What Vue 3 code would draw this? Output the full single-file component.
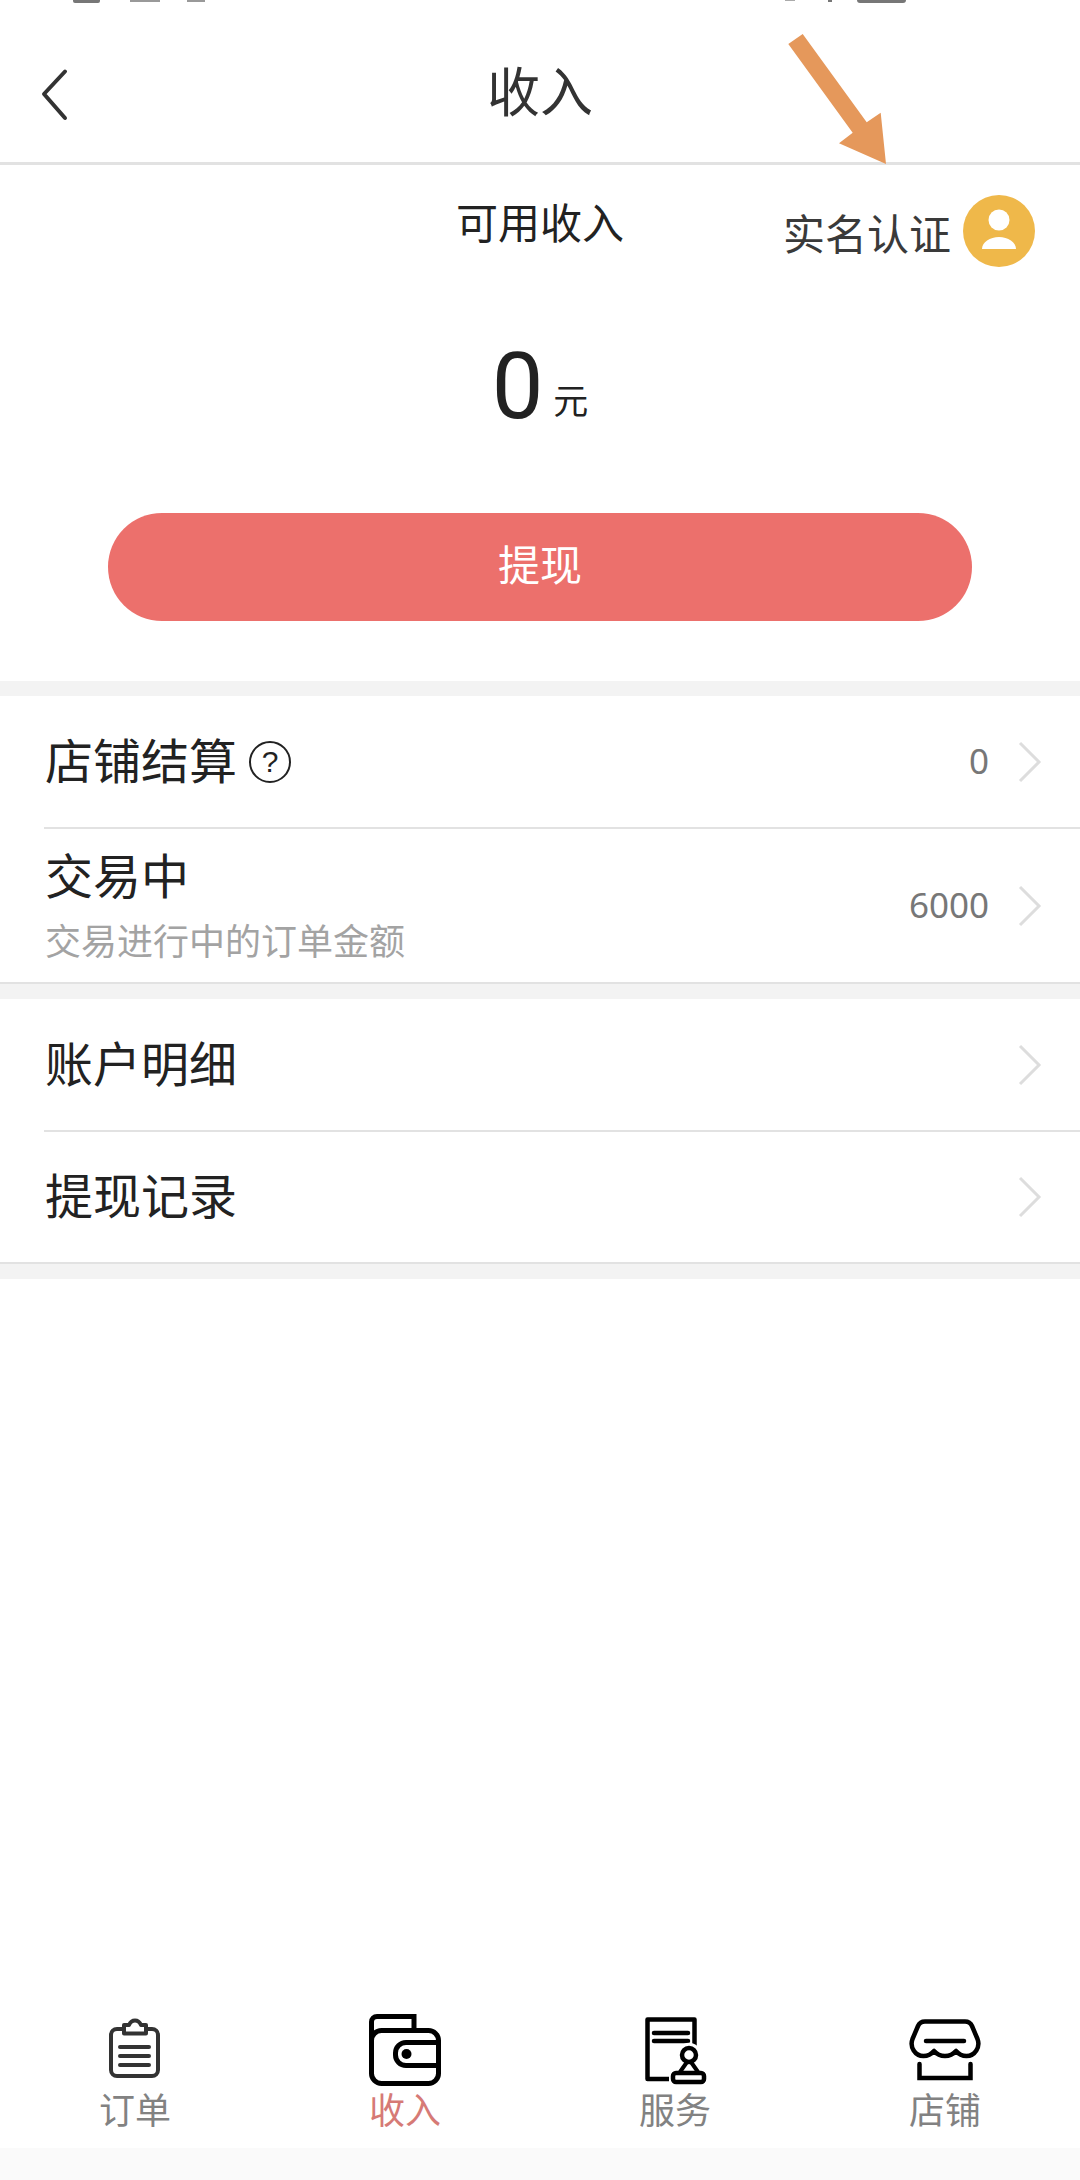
<template>
  <div class="page">
    <div class="status-bar">
      <div class="status-left">
        <span class="sb-sim"></span>
        <span class="sb-signal"></span>
        <span class="sb-wifi"></span>
      </div>
      <div class="status-right">
        <span class="sb-alarm"></span>
        <span class="sb-dot"></span>
        <span class="sb-battery"></span>
      </div>
    </div>

    <header class="nav">
      <svg class="back" width="32" height="56" viewBox="0 0 32 56">
        <path d="M25 3.5 4 26l21 24" fill="none" stroke="#333" stroke-width="4" stroke-linecap="round" stroke-linejoin="round" />
      </svg>
      <h1 class="title">收入</h1>
    </header>

    <svg class="arrow" width="110" height="140" viewBox="780 30 110 140">
      <polygon points="788.3,44 802.7,34 866.7,122.3 880.7,112.7 886,164 839,143.3 852.7,132.7" fill="#e5985b" />
    </svg>

    <section class="summary">
      <div class="verify">
        <span>实名认证</span>
        <svg width="72" height="72" viewBox="0 0 72 72">
          <circle cx="36" cy="36" r="36" fill="#efb84a" />
          <circle cx="36" cy="25" r="10.5" fill="#fff" />
          <path d="M19 54c0-7 8-12 17-12s17 5 17 12z" fill="#fff" />
        </svg>
      </div>
      <div class="label">可用收入</div>
      <div class="amount"><span class="num">0</span><span class="unit">元</span></div>
      <button class="withdraw">提现</button>
    </section>

    <div class="gap"></div>

    <div class="row row-first">
      <div class="row-text row-line">
        <span class="row-title">店铺结算</span>
        <span class="help">?</span>
      </div>
      <div class="row-end row-line">
        <span class="row-value">0</span>
        <svg class="chev" width="24" height="42" viewBox="0 0 24 42"><path d="M2 2l19 19L2 40" fill="none" stroke="#ddd" stroke-width="3" /></svg>
      </div>
    </div>
    <div class="row row-second row-full">
      <div class="row-text stacked">
        <span class="row-title">交易中</span>
        <span class="row-sub">交易进行中的订单金额</span>
      </div>
      <div class="row-end">
        <span class="row-value">6000</span>
        <svg class="chev" width="24" height="42" viewBox="0 0 24 42"><path d="M2 2l19 19L2 40" fill="none" stroke="#ddd" stroke-width="3" /></svg>
      </div>
    </div>

    <div class="gap"></div>

    <div class="row row-first">
      <div class="row-text row-line">
        <span class="row-title">账户明细</span>
      </div>
      <div class="row-end row-line">
        <svg class="chev" width="24" height="42" viewBox="0 0 24 42"><path d="M2 2l19 19L2 40" fill="none" stroke="#ddd" stroke-width="3" /></svg>
      </div>
    </div>
    <div class="row row-last row-full">
      <div class="row-text">
        <span class="row-title">提现记录</span>
      </div>
      <div class="row-end">
        <svg class="chev" width="24" height="42" viewBox="0 0 24 42"><path d="M2 2l19 19L2 40" fill="none" stroke="#ddd" stroke-width="3" /></svg>
      </div>
    </div>

    <div class="gap"></div>

    <div class="spacer"></div>

    <nav class="tabs">
      <div class="tab">
        <svg width="80" height="80" viewBox="0 0 80 80" fill="none" stroke="#333" stroke-width="4">
          <rect x="16" y="19" width="47" height="47" rx="6" />
          <path d="M29 23.5V15h5q2-4.5 6-4.5t6 4.5h5v8.5z" fill="#fff" stroke-linejoin="round" />
          <path d="M25 37h29M25 46h29M25 55h29" stroke-linecap="round" />
        </svg>
        <span>订单</span>
      </div>
      <div class="tab active">
        <svg width="80" height="80" viewBox="0 0 80 80" fill="none" stroke="#000" stroke-width="5">
          <path d="M6.5 30V12a5.500 5.500 0 0 1 5.500-5.500H49V20.500" />
          <rect x="6.500" y="20.500" width="67" height="53" rx="10" />
          <path d="M73.500 32.500H41A10.500 10.500 0 0 0 30.500 43v2A10.500 10.500 0 0 0 41 55.500H73.500" />
          <circle cx="41.500" cy="44" r="5" fill="#000" stroke="none" />
        </svg>
        <span>收入</span>
      </div>
      <div class="tab">
        <svg width="80" height="80" viewBox="0 0 80 80" fill="none" stroke="#000" stroke-width="4.500">
          <path d="M59.500 36V9.500H12.500V69H34" stroke-linejoin="round" />
          <path d="M19 23h34M19 31h34" stroke-linecap="round" />
          <circle cx="54" cy="45" r="10" fill="#fff" stroke="#fff" />
          <circle cx="54" cy="45" r="7" fill="#fff" />
          <path d="M52 52 45 62M56 52l7 10" stroke-width="4" />
          <rect x="38" y="63" width="31" height="9" rx="3" fill="#fff" />
        </svg>
        <span>服务</span>
      </div>
      <div class="tab">
        <svg width="80" height="80" viewBox="0 0 80 80" fill="none" stroke="#000" stroke-width="4.500">
          <path d="M20 11.500H60q5 0 7 4.500l5.500 13c3 8-2.500 17-11 17-5 0-8-2-10.500-5-3 3.500-6.500 5-11 5s-8-1.500-11-5c-2.500 3-5.500 5-10.500 5-8.500 0-14-9-11-17l5.500-13q2-4.500 7-4.500z" stroke-linejoin="round" />
          <path d="M21 31h38" stroke-linecap="round" />
          <path d="M14.500 54V68H65.500V54" stroke-linecap="round" />
        </svg>
        <span>店铺</span>
      </div>
    </nav>
    <div class="bottom-strip"></div>
  </div>
</template>

<script setup>
</script>

<style>
html, body {
  margin: 0;
  background: #fff;
}
</style>

<style scoped>
.page {
  position: relative;
  width: 1080px;
  height: 2180px;
  display: flex;
  flex-direction: column;
  background: #fff;
  overflow: hidden;
  font-family: "Noto Sans CJK SC", "Noto Sans", sans-serif;
}

.status-bar {
  height: 24px;
  display: flex;
  justify-content: space-between;
  align-items: flex-start;
  padding: 0 174px 0 73px;
}

.status-left, .status-right {
  display: flex;
  align-items: flex-start;
}

.sb-sim { width: 27px; height: 3px; background: #777; border-radius: 0 0 2px 2px; }
.sb-signal { width: 30px; height: 2px; margin-left: 30px; background: #999; }
.sb-wifi { width: 18px; height: 2px; margin-left: 27px; background: #999; }
.sb-alarm { width: 10px; height: 1px; background: #aaa; }
.sb-dot { width: 4px; height: 2px; margin-left: 33px; background: #777; }
.sb-battery { width: 49px; height: 3px; margin-left: 25px; background: #777; border-radius: 0 0 3px 3px; }

.nav {
  height: 141px;
  box-sizing: border-box;
  border-bottom: 3px solid #e2e2e2;
  display: flex;
  align-items: center;
  justify-content: center;
  position: relative;
}

.back {
  position: absolute;
  left: 40px;
  top: 44px;
}

.title {
  margin: 0 0 9px;
  font-size: 53px;
  font-weight: 400;
  color: #333;
  line-height: 72px;
}

.arrow {
  position: absolute;
  left: 780px;
  top: 30px;
  z-index: 2;
}

.summary {
  position: relative;
  height: 516px;
  box-sizing: border-box;
  padding-top: 26px;
  display: flex;
  flex-direction: column;
  align-items: center;
}

.verify {
  position: absolute;
  top: 30px;
  right: 45px;
  display: flex;
  align-items: center;
  gap: 12px;
  font-size: 42px;
  color: #3a3a3a;
}

.label {
  font-size: 42px;
  line-height: 60px;
  color: #222;
}

.amount {
  margin-top: 76px;
  height: 120px;
  display: flex;
  align-items: baseline;
  color: #222;
}

.num {
  font-family: Roboto, sans-serif;
  font-size: 92px;
  line-height: 120px;
}

.unit {
  font-size: 35px;
  margin-left: 10px;
  position: relative;
  top: -4px;
}

.withdraw {
  margin-top: 66px;
  width: 864px;
  height: 108px;
  padding: 0 0 10px;
  border: none;
  border-radius: 54px;
  background: #ec706c;
  color: #fff;
  font-family: inherit;
  font-size: 42px;
}

.gap {
  height: 15px;
  background: #f3f3f3;
}

.row {
  display: flex;
  padding-left: 45px;
  box-sizing: border-box;
}

.row-first { height: 133px; }
.row-second { height: 155px; }
.row-last { height: 132px; }

.row-full {
  border-bottom: 2px solid #e2e2e2;
}

.row-line {
  border-bottom: 2px solid #e2e2e2;
}

.row-first .row-line:first-child {
  margin-left: -1px;
  padding-left: 1px;
}

.row-text {
  flex: 1;
  display: flex;
  align-items: center;
  padding-bottom: 8px;
}

.stacked {
  flex-direction: column;
  align-items: flex-start;
  justify-content: flex-start;
  padding: 11px 0 0;
}

.row-title {
  font-size: 48px;
  line-height: 66px;
  color: #222;
}

.row-sub {
  margin-top: 8px;
  font-size: 36px;
  line-height: 50px;
  color: #a3a3a3;
}

.help {
  margin: 8px 0 0 12px;
  box-sizing: border-box;
  width: 42px;
  height: 42px;
  border: 2px solid #222;
  border-radius: 50%;
  display: flex;
  align-items: center;
  justify-content: center;
  font-family: "Liberation Sans", sans-serif;
  font-size: 30px;
  color: #222;
}

.row-end {
  display: flex;
  align-items: center;
  padding-right: 38px;
}

.row-value {
  font-family: "Noto Sans", sans-serif;
  font-size: 35px;
  line-height: 48px;
  color: #777;
  margin: 0 29px 2px 0;
}

.spacer {
  flex: 1;
}

.tabs {
  display: grid;
  grid-template-columns: repeat(4, 1fr);
  height: 138px;
}

.tab {
  display: flex;
  flex-direction: column;
  align-items: center;
  font-size: 36px;
  line-height: 50px;
  color: #828282;
}

.tab svg {
  display: block;
}

.tab span {
  margin-top: -7px;
}

.tab.active {
  color: #d67a76;
}

.bottom-strip {
  height: 32px;
  background: #fafafa;
}
</style>
